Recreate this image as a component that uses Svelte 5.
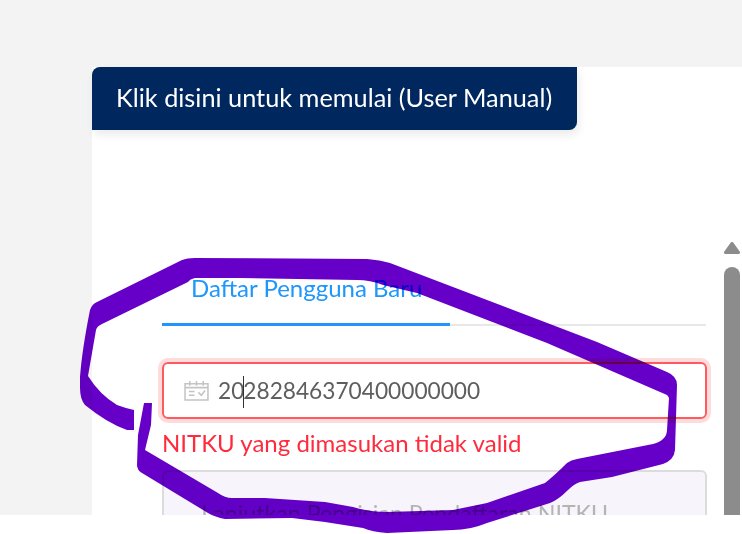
<script>
  const scribble = "M134 410 L134 430 L127 430 Q107 423 85 405 Q80 399 80 388 L80 377 Q82 350 90 310 Q92 304 97 302 L182 260 Q187 258 195 258 L367 259 Q380 260 390 263 L597 342 L667 372 Q677 376 677 385 L675 450 Q674 460 663 464 L612 477 L580 482 Q574 484 568 490 Q558 500 550 503 L487 523 Q470 530 453 530 L387 533 Q372 532 363 528 L325 522 L292 518 L225 519 Q215 517 208 513 L142 473 Q137 470 137 465 L138 435 L144 403 L152 403 L151 425 L145 450 L218 493 Q225 498 232 498 L265 498 L325 502 L353 507 Q370 512 387 512 L453 510 L487 503 L545 483 Q555 475 567 463 Q571 460 577 459 L653 444 Q667 440 667 430 L669 398 Q668 396 667 395 L547 343 L417 293 L383 285 Q370 280 357 280 L240 278 L195 278 Q190 279 188 282 L102 324 Q97 326 96 330 L88 376 Q100 395 117 405 Q125 408 134 410 Z";
</script>

<div class="page">
  <section class="panel">
    <button class="manual">Klik disini untuk memulai (User Manual)</button>
    <div class="body">
      <div class="content">
        <div class="tabs"><span class="tab">Daftar Pengguna Baru</span></div>
        <div class="field">
          <svg class="cal" viewBox="0 0 26 22" fill="none" stroke="#c4c4c4" stroke-width="1.6">
            <path d="M1 4h24v17H1z" />
            <path d="M1 8h24M6 1v5M13 1v5M20 1v5M5 12h6M5 16h6" />
            <path d="M15 13l3 3 4-5" />
          </svg>
          <span class="value">20<i class="caret"></i>282846370400000000</span>
        </div>
        <p class="error">NITKU yang dimasukan tidak valid</p>
        <div class="submit">Lanjutkan Pengisian Pendaftaran NITKU</div>
      </div>
      <div class="scrollbar">
        <svg class="arrow" viewBox="0 0 16 12"><path d="M8 1.5 L14.5 10.5 H1.5 Z" fill="#8c8c8c" stroke="#8c8c8c" stroke-width="3" stroke-linejoin="round" /></svg>
        <span class="thumb"></span>
      </div>
    </div>
  </section>
</div>

<svg class="ink" viewBox="0 0 742 534" width="742" height="534"><path d={scribble} fill="#6600c8" /></svg>

<style>
  :global(body) { margin: 0; background: #fff; }
  .page {
    height: 515px;
    width: 742px;
    box-sizing: border-box;
    padding: 67px 0 0 92px;
    background: #f3f3f3;
    overflow: hidden;
    font-family: Lato, sans-serif;
  }
  .panel { width: 650px; height: 448px; background: #fff; }
  .manual {
    display: block;
    width: 485px;
    height: 63px;
    border: 0;
    padding: 0 0 3px 24px;
    text-align: left;
    color: #fff;
    background: #00275e;
    border-radius: 8px 0 8px 0;
    box-shadow: 2px 5px 8px rgba(0, 0, 0, 0.08);
    font: 25.3px Lato, sans-serif;
  }
  .body { display: flex; padding-top: 112px; }
  .content { width: 544px; margin-left: 70px; }
  .tabs { height: 84px; box-sizing: border-box; border-bottom: 2px solid #e8e8e8; margin-bottom: 36px; }
  .tab {
    display: block;
    width: 288px;
    height: 84px;
    box-sizing: border-box;
    padding: 31px 0 0 29px;
    color: #1e96fb;
    font-size: 24px;
    line-height: 30px;
    border-bottom: 3px solid #1e96fb;
  }
  .field {
    display: flex;
    align-items: center;
    gap: 9px;
    height: 57px;
    width: 545px;
    box-sizing: border-box;
    padding-left: 20px;
    border: 2px solid #ff5a60;
    border-radius: 6px;
    box-shadow: 0 0 0 4px #ffdcdc;
  }
  .cal { width: 25px; height: 21px; flex: none; }
  .value { color: #5e5e5e; font-size: 22.7px; position: relative; }
  .caret { display: inline-block; width: 0; height: 32px; border-left: 1px solid #333; vertical-align: middle; margin: -6px -1px -4px -1px; }
  .error { margin: 6px 0 0; height: 45px; color: #ff2b3d; font-size: 24px; line-height: 36px; white-space: nowrap; }
  .submit {
    height: 60px;
    width: 545px;
    box-sizing: border-box;
    padding: 26px 97px 0 0;
    background: #f7f5fb;
    border: 2px solid #dcdcdc;
    border-radius: 6px;
    color: #b4b4b4;
    font-size: 23.2px;
    line-height: 30px;
    text-align: right;
    white-space: nowrap;
  }
  .scrollbar { width: 16px; margin-left: 18px; display: flex; flex-direction: column; align-items: center; }
  .arrow { width: 16px; height: 12px; flex: none; }
  .thumb { width: 16px; height: 260px; margin-top: 13px; background: #8c8c8c; border-radius: 8px 8px 0 0; }
  .ink { position: absolute; left: 0; top: 0; mix-blend-mode: multiply; }
</style>
